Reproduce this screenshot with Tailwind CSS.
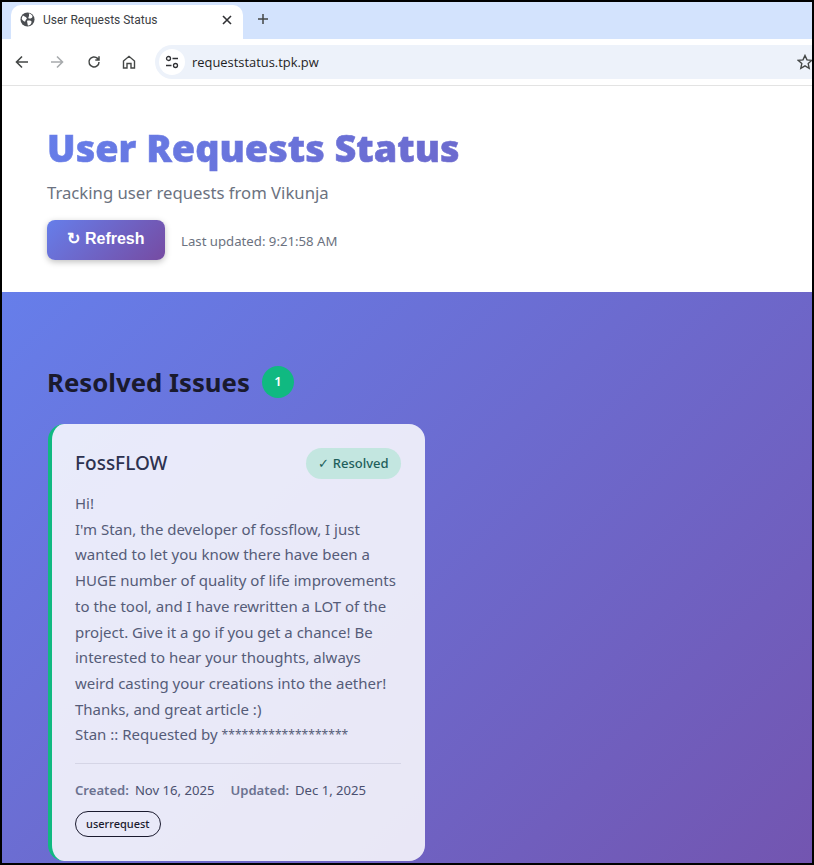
<!DOCTYPE html>
<html lang="en">
<head>
    <meta charset="UTF-8">
    <meta name="viewport" content="width=device-width, initial-scale=1.0">
    <title>User Requests Status</title>
    <script src="https://cdn.jsdelivr.net/npm/@tailwindcss/browser@4"></script>
</head>
<body class="bg-black">
    <div class="w-[814px] h-[865px] border-2 border-black overflow-hidden flex flex-col font-['Noto_Sans',sans-serif]">
        <!-- browser tab strip -->
        <div class="h-[37px] shrink-0 bg-[#d3e3fd] flex items-end pl-[9px]">
            <div class="w-[232px] h-[34px] bg-white rounded-t-[10px] flex items-center pl-[9px] pr-[9px] pb-[5px]">
                <svg class="w-[15px] h-[15px] shrink-0" viewBox="0 0 16 16"><circle cx="8" cy="8" r="7.5" fill="#4a4d51"/><path d="M3.2 3.6C5 4.6 6.6 5.4 7.4 6.6 6.6 8 5.6 9 5.4 10.4 3.6 9.6 2.4 8.6 1.8 7.2 2 6 2.5 4.6 3.2 3.6zM9.4 1.4c1.6.4 3 1.4 3.8 2.6.4 1.6-.4 2.6-1.8 2.8-1 .1-2 .1-2.6-.5C9.6 5 10 3 9.4 1.4zM7.6 9.2c1.6-.2 3-.1 4.4.4.6 1 .2 2.4-.6 3.4-.8.8-2 1.4-3 1.5-.4-1-.2-2-.6-3-.2-.8-.4-1.4-.2-2.3z" fill="#fff"/></svg>
                <span class="ml-[8px] text-[12px] text-[#3c4043] font-['Roboto',sans-serif] whitespace-nowrap">User Requests Status</span>
                <svg class="ml-auto mr-[2px] w-[10px] h-[10px]" viewBox="0 0 10 10"><path d="M1 1l8 8M9 1l-8 8" stroke="#303134" stroke-width="1.6" fill="none"/></svg>
            </div>
            <svg class="ml-[14px] mb-[14px] w-[12px] h-[12px]" viewBox="0 0 12 12"><path d="M6 1v10M1 6h10" stroke="#444746" stroke-width="1.5" fill="none"/></svg>
        </div>
        <!-- browser toolbar -->
        <div class="h-[47px] shrink-0 bg-white border-b border-[#e3e3e3] flex items-center pl-[13px] pb-[1px]">
            <svg class="w-[14px] h-[14px]" viewBox="0 0 14 14"><path d="M13 7H2M7 1.5L1.5 7 7 12.5" stroke="#444746" stroke-width="1.6" fill="none"/></svg>
            <svg class="ml-[21px] w-[14px] h-[14px]" viewBox="0 0 14 14"><path d="M1 7h11M7 1.5L12.5 7 7 12.5" stroke="#a8abad" stroke-width="1.6" fill="none"/></svg>
            <svg class="ml-[23px] w-[14px] h-[14px]" viewBox="0 0 14 14"><path d="M12 7a5 5 0 1 1-1.5-3.6L12 5M12 1.2V5H8.3" stroke="#444746" stroke-width="1.5" fill="none"/></svg>
            <svg class="ml-[21px] w-[14px] h-[14px]" viewBox="0 0 14 14"><path d="M1.5 6L7 1.3 12.5 6v7H9V8.5H5V13H1.5z" stroke="#444746" stroke-width="1.4" fill="none"/></svg>
            <div class="ml-[19px] flex-1 h-[34px] bg-[#edf2fa] rounded-l-[17px] flex items-center pl-[4px] relative">
                <div class="w-[26px] h-[26px] bg-white rounded-full flex items-center justify-center">
                    <svg class="w-[14px] h-[14px]" viewBox="0 0 14 14"><g stroke="#303134" stroke-width="1.3" fill="none"><circle cx="3.5" cy="3.5" r="2"/><path d="M7.5 3.5H13M1 10.5h5.5"/><circle cx="10.5" cy="10.5" r="2"/></g></svg>
                </div>
                <span class="ml-[7px] pt-[2px] text-[12.9px] text-[#1f1f1f] font-['Open_Sans',sans-serif]">requeststatus.tpk.pw</span>
                <svg class="absolute right-[-1px] top-[9px] w-[16px] h-[16px]" viewBox="0 0 16 16"><path d="M8 1.5l2 4.4 4.7.5-3.5 3.2 1 4.7L8 11.9l-4.2 2.4 1-4.7L1.3 6.4 6 5.9z" stroke="#444746" stroke-width="1.4" fill="none"/></svg>
            </div>
        </div>
        <!-- page header -->
        <header class="h-[206px] shrink-0 bg-white pl-[45px] pt-[37px]">
            <h1 class="w-[1100px] text-[37.85px] leading-[50px] font-black text-transparent bg-clip-text bg-[linear-gradient(135deg,#667eea,#764ba2)] whitespace-nowrap [-webkit-text-stroke:0.6px_transparent]">User Requests Status</h1>
            <p class="mt-[7px] text-[16.7px] leading-[26px] text-[#6b7280]">Tracking user requests from Vikunja</p>
            <div class="mt-[14px] flex items-center">
                <button class="w-[118px] h-[40px] rounded-[8px] bg-[linear-gradient(135deg,#667eea,#764ba2)] text-white font-bold text-[16px] font-['Liberation_Sans',sans-serif] shadow-[0_2px_6px_rgba(0,0,0,0.25)] pb-[3px]">↻ Refresh</button>
                <span class="ml-[16px] text-[13.2px] text-[#6b7280] mt-[3px]">Last updated: 9:21:58 AM</span>
            </div>
        </header>
        <!-- resolved list -->
        <main class="flex-1 bg-[linear-gradient(135deg,#667eea,#764ba2)] bg-no-repeat bg-[length:100%_912px] pl-[46px] pt-[72px]">
            <div class="flex items-center -ml-[1px]">
                <h2 class="-mt-[1px] mb-[1px] text-[25.75px] leading-[38px] font-bold text-[#1a1a2e]">Resolved Issues</h2>
                <span class="ml-[12px] w-[32px] h-[32px] rounded-full bg-[#10b981] text-white text-[13px] font-semibold flex items-center justify-center mb-[3px]">1</span>
            </div>
            <article class="mt-[22px] w-[377px] h-[437px] rounded-[16px] border-l-4 border-[#10b981] bg-white/85 pl-[23px] pr-[24px] pt-[24px]">
                <div class="flex items-center justify-between">
                    <h3 class="-mt-[1px] text-[19px] leading-[30px] font-medium text-[#2d3250]">FossFLOW</h3>
                    <span class="h-[31px] w-[95px] rounded-full bg-[#c3e6e0] text-[#1f5f5b] text-[13px] font-medium flex items-center justify-center pt-[1px]">✓ Resolved</span>
                </div>
                <p class="mt-[12px] text-[15px] leading-[25.7px] text-[#555c78]">Hi!<br>I'm Stan, the developer of fossflow, I just<br>wanted to let you know there have been a<br>HUGE number of quality of life improvements<br>to the tool, and I have rewritten a LOT of the<br>project. Give it a go if you get a chance! Be<br>interested to hear your thoughts, always<br>weird casting your creations into the aether!<br>Thanks, and great article :)<br>Stan :: Requested by <span class="text-[12.1px] leading-none align-[1px]">*******************</span></p>
                <div class="mt-[15px] border-t border-[#d5d5e6] pt-[16px] flex items-center text-[13.1px] leading-[20px]">
                    <span class="font-semibold text-[#6b7290]">Created:</span>
                    <span class="ml-[6px] text-[#4b5070]">Nov 16, 2025</span>
                    <span class="ml-[16px] font-semibold text-[#6b7290]">Updated:</span>
                    <span class="ml-[6px] text-[#4b5070]">Dec 1, 2025</span>
                </div>
                <span class="mt-[11px] inline-flex items-center h-[26px] px-[10px] rounded-full border border-[#1a1a2e] text-[11px] font-medium text-[#1a1a2e]">userrequest</span>
            </article>
        </main>
    </div>
</body>
</html>
